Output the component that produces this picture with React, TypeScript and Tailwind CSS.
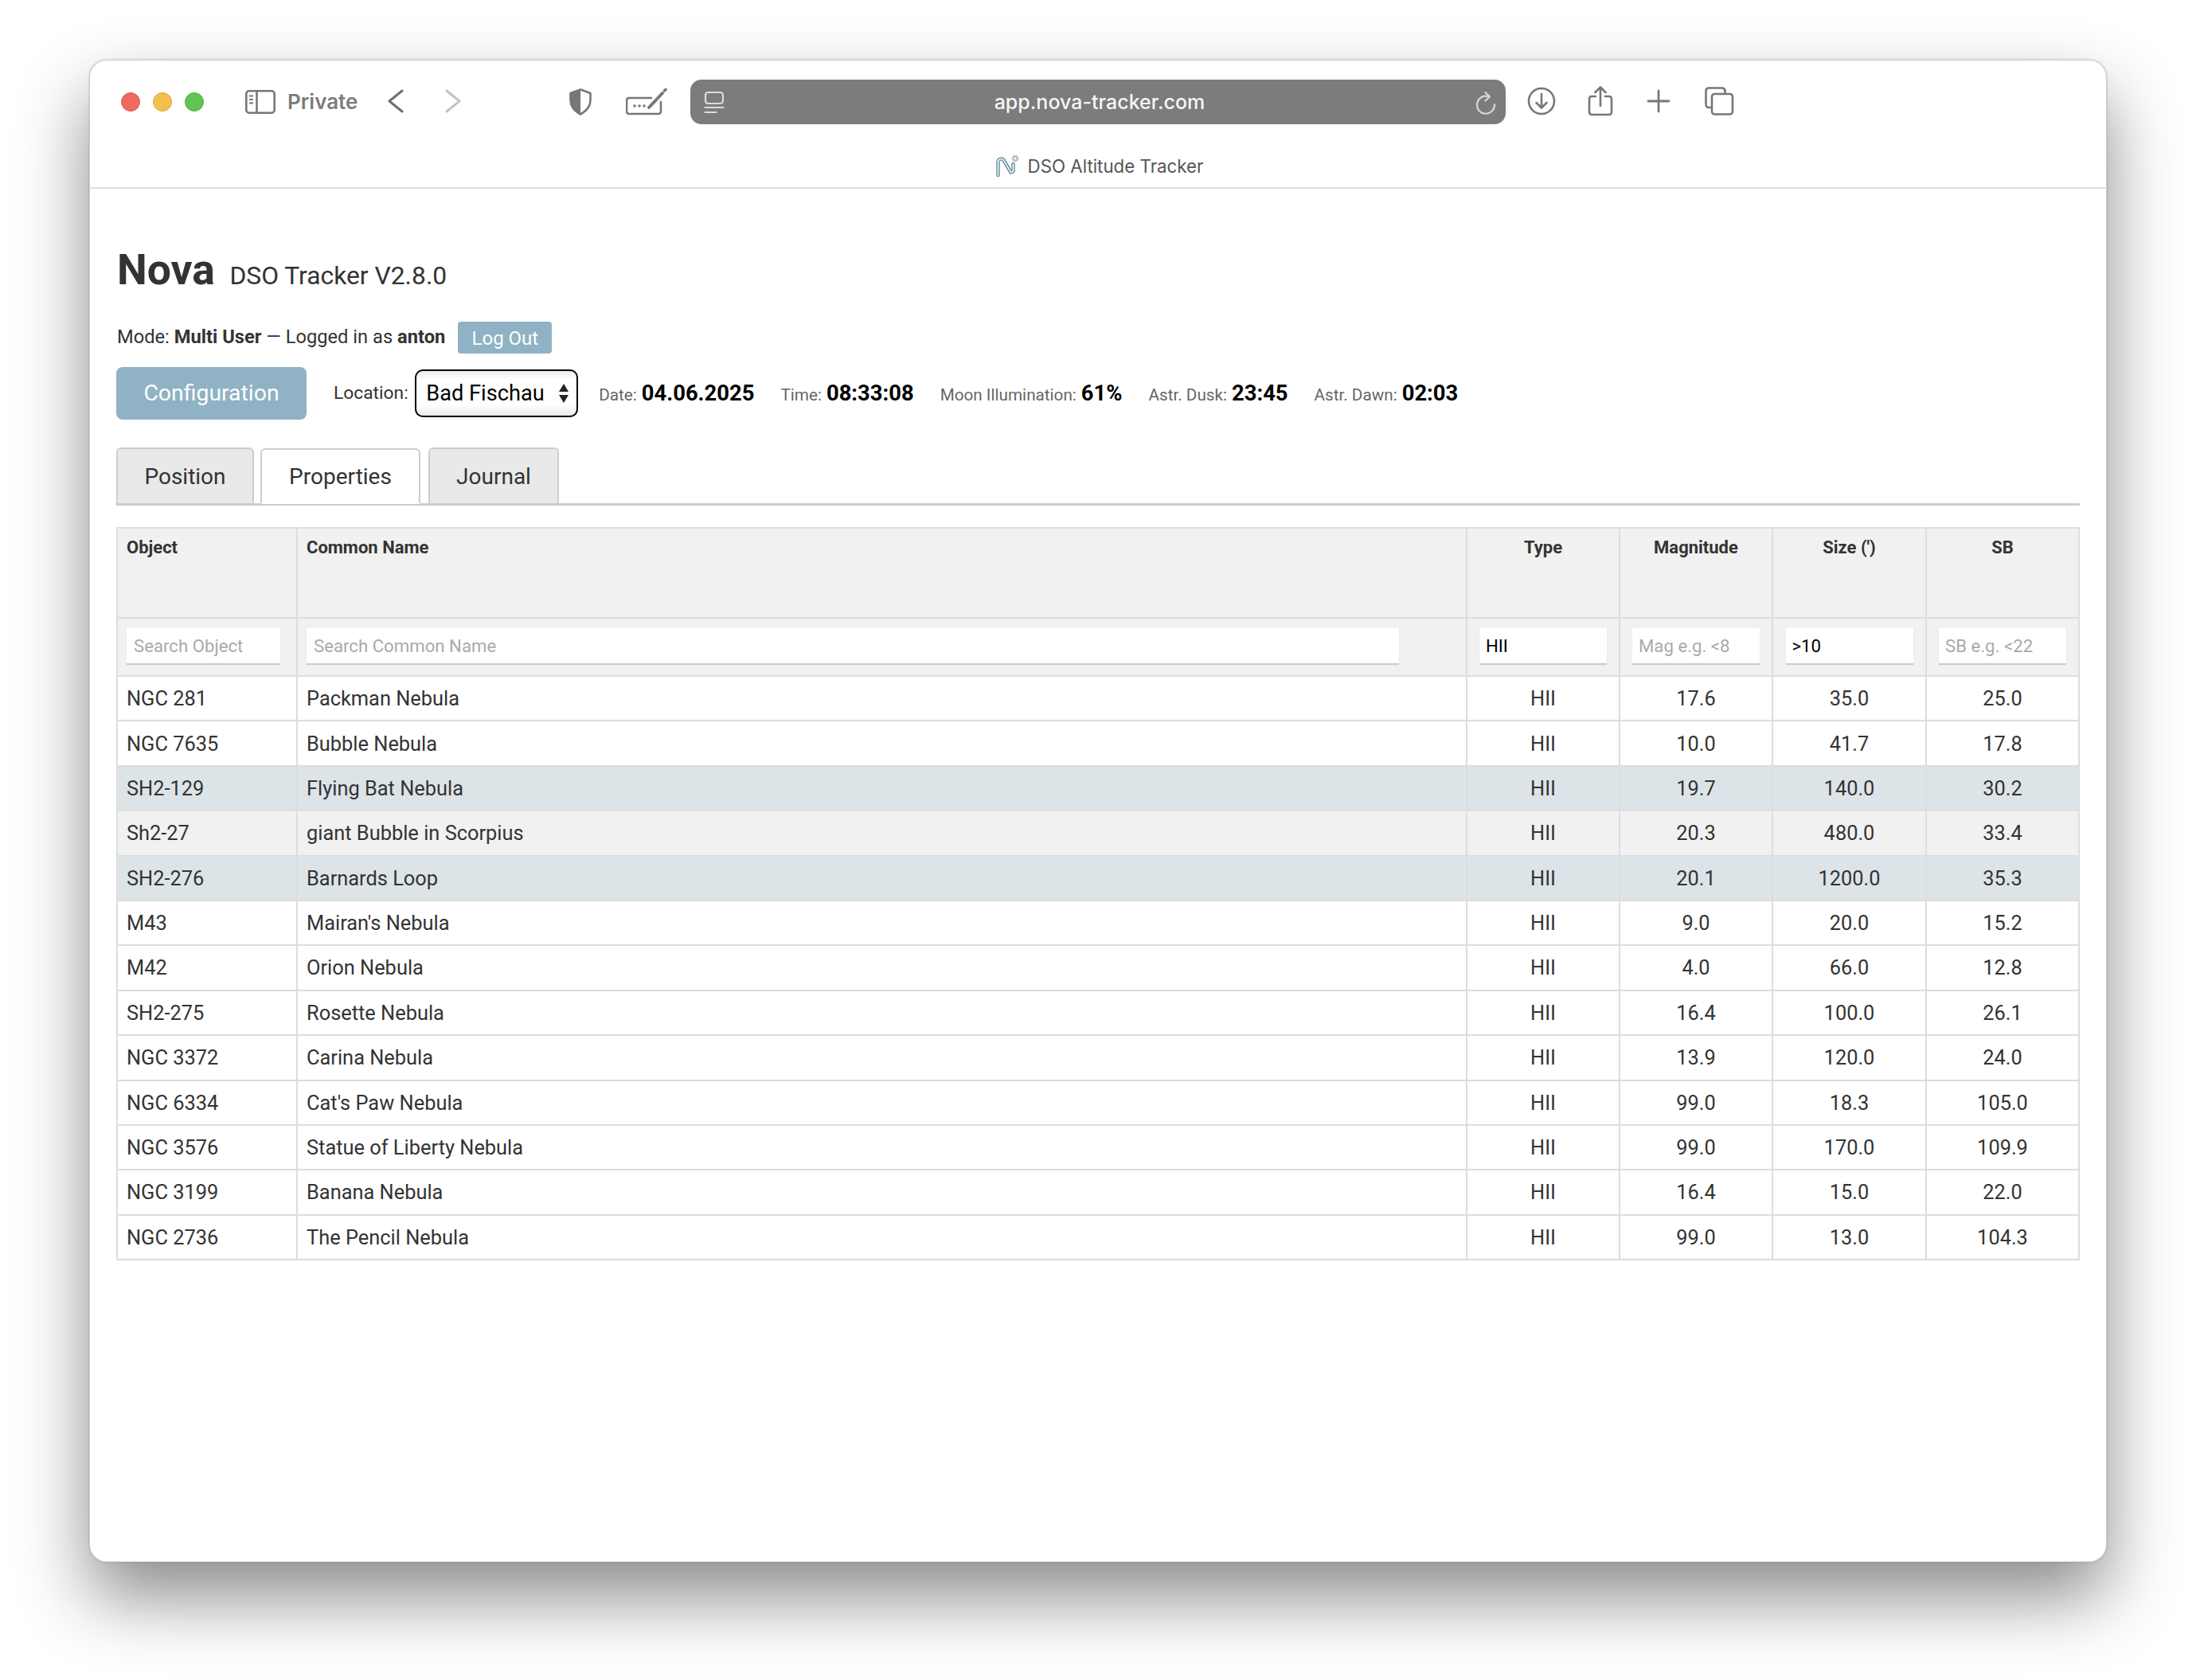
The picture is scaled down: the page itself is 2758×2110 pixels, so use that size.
import React from "react";

const rows: [string, string, string, string, string, string?][] = [
  ["NGC 281", "Packman Nebula", "17.6", "35.0", "25.0"],
  ["NGC 7635", "Bubble Nebula", "10.0", "41.7", "17.8"],
  ["SH2-129", "Flying Bat Nebula", "19.7", "140.0", "30.2", "bg-[#dde4e8]"],
  ["Sh2-27", "giant Bubble in Scorpius", "20.3", "480.0", "33.4", "bg-[#f1f1f1]"],
  ["SH2-276", "Barnards Loop", "20.1", "1200.0", "35.3", "bg-[#dde4e8]"],
  ["M43", "Mairan's Nebula", "9.0", "20.0", "15.2"],
  ["M42", "Orion Nebula", "4.0", "66.0", "12.8"],
  ["SH2-275", "Rosette Nebula", "16.4", "100.0", "26.1"],
  ["NGC 3372", "Carina Nebula", "13.9", "120.0", "24.0"],
  ["NGC 6334", "Cat's Paw Nebula", "99.0", "18.3", "105.0"],
  ["NGC 3576", "Statue of Liberty Nebula", "99.0", "170.0", "109.9"],
  ["NGC 3199", "Banana Nebula", "16.4", "15.0", "22.0"],
  ["NGC 2736", "The Pencil Nebula", "99.0", "13.0", "104.3"],
];

const GREY = "#777777";

function Info({ label, value }: { label: string; value: string }) {
  return (
    <span className="flex items-baseline whitespace-nowrap">
      <span className="text-[20.7px] text-[#666]">{label}</span>
      <span className="ml-[6px] text-[27.4px] font-bold text-black">{value}</span>
    </span>
  );
}

function Tab({ label, active, w }: { label: string; active?: boolean; w: string }) {
  return (
    <div
      className={`${w} flex h-[70px] items-center justify-center rounded-t-[6px] border-2 border-[#ccc] pt-[2px] text-[28px] text-[#333] ${
        active ? "relative z-10 -mb-[1px] border-b-white bg-white" : "bg-[#e9e9e9] border-b-0"
      }`}
    >
      {label}
    </div>
  );
}

function FilterCell({ placeholder, value }: { placeholder: string; value?: string }) {
  return (
    <th className="border-2 border-[#ddd] p-0 font-normal">
      <div className="flex h-[71px] items-center justify-center pb-[2px]">
        <input
          readOnly
          value={value ?? ""}
          placeholder={placeholder}
          className="h-[47px] w-[160px] border-b-2 border-[#ccc] bg-white pl-[8px] text-[22.2px] text-black outline-none placeholder:text-[#aaa] shadow-[0_0_1px_rgba(0,0,0,0.15)]"
        />
      </div>
    </th>
  );
}

export default function App() {
  return (
    <div className="h-[2110px] w-[2758px] overflow-hidden bg-white pl-[112px] pt-[75px] [font-family:Roboto,sans-serif]">
      <div className="h-[1887px] w-[2534px] rounded-[22px] bg-white shadow-[inset_0_0_0_1px_rgba(0,0,0,0.2),0_0_3px_rgba(0,0,0,0.2),0_44px_90px_rgba(0,0,0,0.46)]">
        {/* Browser chrome */}
        <header className="h-[162px] border-b-2 border-[#e0e0e0] [font-family:Inter,sans-serif]">
          <div className="flex h-[81px] items-center pl-[40px] pt-[25px]">
            <span className="h-[24px] w-[24px] rounded-full border border-[#d9574b] bg-[#ed6a5e]" />
            <span className="ml-[16px] h-[24px] w-[24px] rounded-full border border-[#d9a23e] bg-[#f5bf4f]" />
            <span className="ml-[16px] h-[24px] w-[24px] rounded-full border border-[#4fae44] bg-[#61c454]" />
            <svg className="ml-[52px]" width="38" height="30" viewBox="0 0 38 30" fill="none" stroke={GREY} strokeWidth="2.6">
              <rect x="1.3" y="1.3" width="35.4" height="27.4" rx="3.5" />
              <path d="M14.5 1.5V28.5" />
              <path d="M5 7.5h5M5 12h5M5 16.5h5" strokeWidth="2" />
            </svg>
            <span className="ml-[15px] text-[26px] font-semibold leading-none text-[#7b7b7b]">Private</span>
            <svg className="ml-[38px] -mt-[2px]" width="20" height="30" viewBox="0 0 20 30" fill="none" stroke="#707070" strokeWidth="3" strokeLinecap="round" strokeLinejoin="round">
              <path d="M18 2 2 15l16 13" />
            </svg>
            <svg className="ml-[52px] -mt-[2px]" width="20" height="30" viewBox="0 0 20 30" fill="none" stroke="#c4c4c4" strokeWidth="3" strokeLinecap="round" strokeLinejoin="round">
              <path d="M2 2l16 13L2 28" />
            </svg>
            <svg className="ml-[135px]" width="30" height="34" viewBox="0 0 30 34" fill="none">
              <path d="M15 1.5 27.5 6c.5 12 .5 19-12.5 26.5C2 25 2 18 2.5 6Z" stroke={GREY} strokeWidth="2.6" strokeLinejoin="round" />
              <path d="M15 1.5 2.5 6C2 18 2 25 15 32.5Z" fill={GREY} />
            </svg>
            <svg className="ml-[42px]" width="52" height="34" viewBox="0 0 52 34" fill="none" stroke={GREY} strokeWidth="2.6" strokeLinecap="round">
              <path d="M32 12H4a3 3 0 0 0-3 3v14a3 3 0 0 0 3 3h37a3 3 0 0 0 3-3V17" />
              <path d="M29 24 46 6" strokeWidth="4" />
              <path d="M48.5 3 50 1.5" strokeWidth="3.5" />
              <circle cx="11" cy="22" r="1.8" fill={GREY} stroke="none" />
              <circle cx="17" cy="22" r="1.8" fill={GREY} stroke="none" />
              <circle cx="23" cy="22" r="1.8" fill={GREY} stroke="none" />
            </svg>
            <div className="relative ml-[29px] flex h-[56px] w-[1024px] items-center justify-center rounded-[14px] bg-[#7c7c7c] pl-[3px] pt-[1px] text-[25px] font-medium text-white/95">
              <svg className="absolute left-[17px] top-[14px]" width="26" height="30" viewBox="0 0 26 30" fill="none" stroke="#dcdcdc" strokeWidth="2.2" strokeLinecap="round">
                <rect x="2" y="2" width="22" height="14" rx="3.5" />
                <path d="M1.5 21h23M1.5 27h14" />
              </svg>
              app.nova-tracker.com
              <svg className="absolute right-[12px] top-[14px]" width="26" height="30" viewBox="0 0 26 30" fill="none" stroke="#d6d6d6" strokeWidth="2.2" strokeLinecap="round" strokeLinejoin="round">
                <path d="M17 7.5A11 11 0 1 0 24 17" />
                <path d="M12.5 2 18 7.5 12.5 12.5" />
              </svg>
            </div>
            <svg className="ml-[27px] -mt-[2px]" width="36" height="36" viewBox="0 0 36 36" fill="none" stroke={GREY} strokeWidth="2.6" strokeLinecap="round" strokeLinejoin="round">
              <circle cx="18" cy="18" r="16" />
              <path d="M18 9v17M11.5 20l6.5 6.5 6.5-6.5" />
            </svg>
            <svg className="ml-[40px] -mt-[2px]" width="32" height="38" viewBox="0 0 32 38" fill="none" stroke={GREY} strokeWidth="2.6" strokeLinecap="round" strokeLinejoin="round">
              <path d="M10 13H5a3 3 0 0 0-3 3v17a3 3 0 0 0 3 3h22a3 3 0 0 0 3-3V16a3 3 0 0 0-3-3h-5" />
              <path d="M16 25V2M9.5 8 16 1.5 22.5 8" />
            </svg>
            <svg className="ml-[42px] -mt-[2px]" width="30" height="30" viewBox="0 0 30 30" fill="none" stroke={GREY} strokeWidth="2.8" strokeLinecap="round">
              <path d="M15 2v26M2 15h26" />
            </svg>
            <svg className="ml-[43px] -mt-[2px]" width="37" height="36" viewBox="0 0 37 36" fill="none" stroke={GREY} strokeWidth="2.6">
              <path d="M8 26H5a3.5 3.5 0 0 1-3.5-3.5V5A3.5 3.5 0 0 1 5 1.5h17A3.5 3.5 0 0 1 25.5 5v3" />
              <rect x="9" y="9" width="26" height="25.5" rx="3.5" />
            </svg>
          </div>
          <div className="flex h-[79px] items-center justify-center pl-[3px] pt-[27px] text-[22.3px] text-[#555]">
            <svg className="mr-[11px]" width="30" height="30" viewBox="0 0 30 30" fill="none">
              <path d="M3.5 26V9.5a4 4 0 0 1 7-2.5l9 15.5a3.5 3.5 0 0 0 3-1.5L22.5 12" stroke="#6f94a8" strokeWidth="4.5" strokeLinecap="round" strokeLinejoin="round" />
              <path d="M3.5 26V9.5a4 4 0 0 1 7-2.5l9 15.5a3.5 3.5 0 0 0 3-1.5L22.5 12" stroke="#ffffff" strokeWidth="1.4" strokeLinecap="round" strokeLinejoin="round" />
              <circle cx="25" cy="5" r="4" fill="#bdbdbd" />
              <circle cx="25" cy="5" r="1.5" fill="#ffffff" />
            </svg>
            DSO Altitude Tracker
          </div>
        </header>

        {/* Page */}
        <main className="px-[34px] text-[#333]">
          <div className="flex items-baseline pl-[1px] pt-[72px]">
            <h1 className="text-[53.5px] font-bold leading-[60px]">Nova</h1>
            <span className="ml-[18.5px] text-[31.8px] leading-[40px]">DSO Tracker V2.8.0</span>
          </div>
          <div className="mt-[35px] flex h-[40px] items-center pl-[1px] text-[23.7px]">
            <span>
              Mode: <b>Multi User</b> — Logged in as <b>anton</b>
            </span>
            <button className="ml-[16px] flex h-[40px] w-[118px] items-center justify-center rounded-[4px] bg-[#8fb2c4] pt-[1px] text-[24px] text-white">
              Log Out
            </button>
          </div>
          <div className="mt-[17px] flex h-[66px] items-center">
            <button className="flex h-[66px] w-[239px] items-center justify-center rounded-[8px] bg-[#8fb2c4] text-[28.4px] text-white">
              Configuration
            </button>
            <span className="ml-[34px] text-[22.8px]">Location:</span>
            <div className="relative ml-[8.5px] h-[60px] w-[205px] rounded-[10px] border-2 border-black bg-[linear-gradient(#ececec,#ffffff_20%,#ffffff_75%,#ececec)]">
              <select
                defaultValue="Bad Fischau"
                className="h-full w-full appearance-none bg-transparent pl-[12px] text-[27.2px] text-black outline-none"
              >
                <option>Bad Fischau</option>
              </select>
              <svg className="pointer-events-none absolute right-[9px] top-[15px]" width="14" height="26" viewBox="0 0 14 26" fill="#222">
                <path d="M7 1l6 10H1zM7 25 1 15h12z" />
              </svg>
            </div>
            <div className="ml-[26px] flex gap-[33px] pt-[2px]">
              <Info label="Date:" value="04.06.2025" />
              <Info label="Time:" value="08:33:08" />
              <Info label="Moon Illumination:" value="61%" />
              <Info label="Astr. Dusk:" value="23:45" />
              <Info label="Astr. Dawn:" value="02:03" />
            </div>
          </div>

          <div className="mt-[35px] flex h-[73px] items-end gap-[8px] border-b-[3px] border-[#ccc]">
            <Tab label="Position" w="w-[173px]" />
            <Tab label="Properties" w="w-[201px]" active />
            <Tab label="Journal" w="ml-[2px] w-[164px]" />
          </div>

          <table className="mt-[27px] w-[2464px] table-fixed border-collapse text-[25.4px] text-[#333]">
            <colgroup>
              <col className="w-[226px]" />
              <col className="w-[1469px]" />
              <col className="w-[192px]" />
              <col className="w-[192px]" />
              <col className="w-[193px]" />
              <col className="w-[192px]" />
            </colgroup>
            <thead className="bg-[#f1f1f1] text-[22px]">
              <tr className="h-[113px]">
                <th className="border-2 border-[#ddd] px-[11px] pb-[64px] text-left font-bold">Object</th>
                <th className="border-2 border-[#ddd] px-[11px] pb-[64px] text-left font-bold">Common Name</th>
                <th className="border-2 border-[#ddd] px-[11px] pb-[64px] text-center font-bold">Type</th>
                <th className="border-2 border-[#ddd] px-[11px] pb-[64px] text-center font-bold">Magnitude</th>
                <th className="border-2 border-[#ddd] px-[11px] pb-[64px] text-center font-bold">Size (')</th>
                <th className="border-2 border-[#ddd] px-[11px] pb-[64px] text-center font-bold">SB</th>
              </tr>
              <tr>
                <th className="border-2 border-[#ddd] p-0 font-normal">
                  <div className="flex h-[71px] items-center pb-[2px] pl-[11px]">
                    <input
                      readOnly
                      placeholder="Search Object"
                      className="h-[47px] w-[193px] border-b-2 border-[#ccc] bg-white pl-[9px] text-[22.2px] outline-none placeholder:text-[#aaa] shadow-[0_0_1px_rgba(0,0,0,0.15)]"
                    />
                  </div>
                </th>
                <th className="border-2 border-[#ddd] p-0 font-normal">
                  <div className="flex h-[71px] items-center pb-[2px] pl-[11px]">
                    <input
                      readOnly
                      placeholder="Search Common Name"
                      className="h-[47px] w-[1372px] border-b-2 border-[#ccc] bg-white pl-[9px] text-[22.2px] outline-none placeholder:text-[#aaa] shadow-[0_0_1px_rgba(0,0,0,0.15)]"
                    />
                  </div>
                </th>
                <FilterCell placeholder="" value="HII" />
                <FilterCell placeholder="Mag e.g. <8" />
                <FilterCell placeholder="" value=">10" />
                <FilterCell placeholder="SB e.g. <22" />
              </tr>
            </thead>
            <tbody>
              {rows.map(([obj, name, mag, size, sb, bg]) => (
                <tr key={obj} className={`h-[56.4px] ${bg ?? ""}`}>
                  <td className="border-2 border-[#ddd] px-[11px]">{obj}</td>
                  <td className="border-2 border-[#ddd] px-[11px]">{name}</td>
                  <td className="border-2 border-[#ddd] text-center">HII</td>
                  <td className="border-2 border-[#ddd] text-center">{mag}</td>
                  <td className="border-2 border-[#ddd] text-center">{size}</td>
                  <td className="border-2 border-[#ddd] text-center">{sb}</td>
                </tr>
              ))}
            </tbody>
          </table>
        </main>
      </div>
    </div>
  );
}
